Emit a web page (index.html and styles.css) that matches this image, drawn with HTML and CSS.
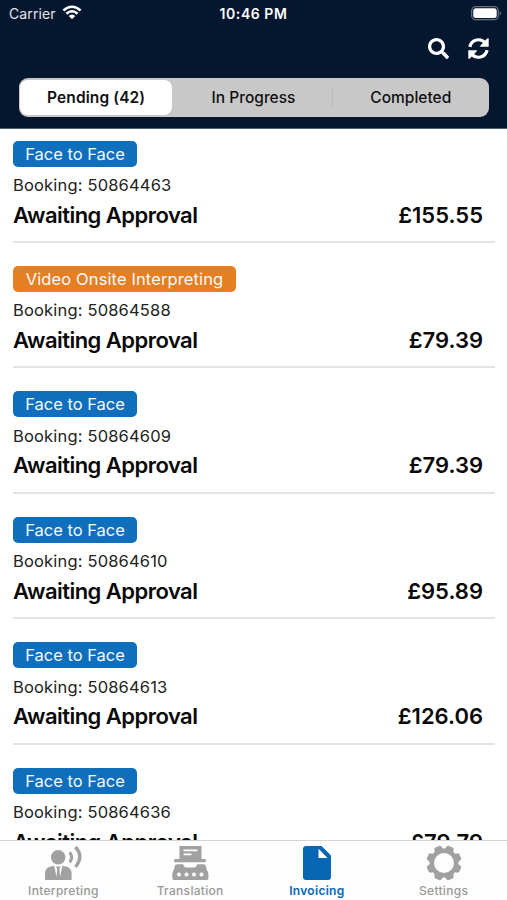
FILE: index.html
```html
<!DOCTYPE html>
<html lang="en">
<head>
<meta charset="utf-8">
<title>Invoicing</title>
<link rel="stylesheet" href="styles.css">
</head>
<body>
<div class="app">
  <header class="header">
    <div class="status">
      <div class="carrier"><span class="carrier-name">Carrier</span>
        <svg class="wifi" width="20" height="15" viewBox="0 0 20 15" fill="none" stroke="#fff" stroke-width="2.500"><path d="M1.400 5.500Q10-2.100 18.600 5.500M4.400 8.800Q10 3.800 15.600 8.800"/><path d="M6.700 11Q10 8 13.300 11L10 14.300Z" fill="#fff" stroke="none"/></svg>
      </div>
      <span class="time">10:46 PM</span>
      <svg class="battery" width="31" height="15" viewBox="0 0 31 15"><rect x=".7" y=".7" width="26.600" height="13" rx="4" fill="none" stroke="#68717f" stroke-width="1.300"/><rect x="2.300" y="2.300" width="23.400" height="9.800" rx="2.500" fill="#fff"/><path d="M28.700 5.200q3 2 0 4.200z" fill="#68717f"/></svg>
    </div>
    <div class="actions">
      <svg width="21" height="21" viewBox="0 0 512 512" fill="#fff"><path d="M505 442.700L405.300 343c-4.500-4.500-10.600-7-17-7H372c27.600-35.300 44-79.700 44-128C416 93.100 322.900 0 208 0S0 93.100 0 208s93.100 208 208 208c48.300 0 92.700-16.400 128-44v16.300c0 6.400 2.500 12.500 7 17l99.700 99.700c9.400 9.400 24.600 9.400 33.900 0l28.300-28.300c9.400-9.400 9.400-24.600.1-34zM208 336c-70.700 0-128-57.200-128-128 0-70.700 57.200-128 128-128 70.700 0 128 57.200 128 128 0 70.700-57.200 128-128 128z"/></svg>
      <svg width="21" height="21" viewBox="0 0 21 21"><g fill="none" stroke="#fff" stroke-width="3.200"><path d="M1.900 8.800A8.800 8.800 0 0 1 17.300 5"/><path d="M19.100 12.200A8.800 8.800 0 0 1 3.700 16"/></g><path d="M20.700 .6V8.800H12.300Q11.800 8.100 12.500 7.400L19.100.6Q20-.1 20.700.6ZM.3 20.400V12.200H8.700Q9.200 12.900 8.500 13.600L1.900 20.400Q1 21.100.3 20.400Z" fill="#fff"/></svg>
    </div>
    <nav class="segments">
      <span class="segment selected">Pending (42)</span>
      <span class="segment divided">In Progress</span>
      <span class="segment">Completed</span>
    </nav>
  </header>
  <main class="list">
    <article class="row"><span class="tag">Face to Face</span><div class="booking">Booking: 50864463</div><div class="summary"><span class="state">Awaiting Approval</span><span class="price">£155.55</span></div></article>
    <article class="row"><span class="tag video">Video Onsite Interpreting</span><div class="booking">Booking: 50864588</div><div class="summary"><span class="state">Awaiting Approval</span><span class="price">£79.39</span></div></article>
    <article class="row"><span class="tag">Face to Face</span><div class="booking">Booking: 50864609</div><div class="summary"><span class="state">Awaiting Approval</span><span class="price">£79.39</span></div></article>
    <article class="row"><span class="tag">Face to Face</span><div class="booking">Booking: 50864610</div><div class="summary"><span class="state">Awaiting Approval</span><span class="price">£95.89</span></div></article>
    <article class="row"><span class="tag">Face to Face</span><div class="booking">Booking: 50864613</div><div class="summary"><span class="state">Awaiting Approval</span><span class="price">£126.06</span></div></article>
    <article class="row"><span class="tag">Face to Face</span><div class="booking">Booking: 50864636</div><div class="summary"><span class="state">Awaiting Approval</span><span class="price">£79.79</span></div></article>
  </main>
  <nav class="tabs">
    <div class="tab">
      <svg width="38" height="36" viewBox="0 0 38 36"><g fill="#a1a1a1"><circle cx="14.200" cy="12.300" r="7.200"/><path d="M1 35v-6.500q0-6 6-7l3.200-.8L12.500 32l.7-8-1.200-2.500h4.600L15.400 24l.7 8 2.300-11.300 3.200.8q6 1 6 7V35z"/></g><g fill="none" stroke="#a1a1a1"><path d="M25.700 7.200q4 5 0 10" stroke-width="3"/><path d="M31.500 2q8.500 9.500 0 20" stroke-width="3.400"/></g></svg>
      <span>Interpreting</span>
    </div>
    <div class="tab">
      <svg width="38" height="36" viewBox="0 0 38 36"><g fill="#a1a1a1"><path d="M8.500 1h22v13h4.200v3.200H3.200V14h5.300z"/><path d="M6 19.300h6.200q1 3.300 3 3.300h8q2 0 3-3.300h6.300q2.200 0 2.500 2.200l.4 2.500 1.800 3.400q.8 6.300-.9 7.600H2.300Q.6 33.300 1.500 27.400L3.100 24l.4-2.500q.3-2.200 2.500-2.200z"/></g><path d="M12.500 5.300h14M12.500 9.300h8" stroke="#fff" stroke-width="1.700"/><g fill="#fff"><circle cx="8" cy="29.500" r="2"/><circle cx="15.500" cy="29.500" r="2"/><circle cx="23" cy="29.500" r="2"/><circle cx="30.500" cy="29.500" r="2"/></g></svg>
      <span>Translation</span>
    </div>
    <div class="tab active">
      <svg width="38" height="36" viewBox="0 0 38 36"><path d="M8 1h15.500L33 10.500V32q0 3-3 3H8q-3 0-3-3V4q0-3 3-3z" fill="#0867b5"/><path d="M20.500 3.700V13h9z" fill="#fff"/></svg>
      <span>Invoicing</span>
    </div>
    <div class="tab">
      <svg width="38" height="36" viewBox="0 0 38 36"><g transform="translate(19 18)"><circle r="12.200" fill="none" stroke="#a1a1a1" stroke-width="4.400"/><g fill="#a1a1a1" transform="rotate(22.500)"><path id="tooth" d="M-5.500-12.300Q-4.200-13.500-3.900-15.700-3.600-17.600-2-17.600H2Q3.600-17.600 3.900-15.700 4.200-13.500 5.500-12.300Z"/><use href="#tooth" transform="rotate(45)"/><use href="#tooth" transform="rotate(90)"/><use href="#tooth" transform="rotate(135)"/><use href="#tooth" transform="rotate(180)"/><use href="#tooth" transform="rotate(225)"/><use href="#tooth" transform="rotate(270)"/><use href="#tooth" transform="rotate(315)"/></g></g></svg>
      <span>Settings</span>
    </div>
  </nav>
</div>
</body>
</html>
```
FILE: styles.css
```css
* { box-sizing: border-box; }
body { margin: 0; background: #fff; font-family: Inter, "Liberation Sans", sans-serif; color: #111; }
svg { display: block; flex: none; }
.app { height: 900px; display: flex; flex-direction: column; overflow: hidden; }
.header { height: 129px; flex: none; background: #04172f; border-bottom: 1px solid #536171; }
.status { height: 28px; display: grid; grid-template-columns: 1fr auto 1fr; align-items: center; padding: 0 6px 1px 9px; color: #fff; }
.carrier { display: flex; align-items: center; gap: 6px; font-size: 14px; color: #e2e6eb; }
.carrier-name { letter-spacing: .1px; }
.wifi { margin-top: -2px; }
.time { font-size: 14px; font-weight: 600; letter-spacing: .55px; margin-right: 3px; }
.battery { justify-self: end; margin-right: -1px; }
.actions { display: flex; justify-content: flex-end; gap: 19px; padding: 10px 18px 0 0; height: 50px; }
.segments { display: grid; grid-template-columns: repeat(3, 1fr); margin: 0 18px 0 19px; height: 39px; border-radius: 9px; background: #c8c8c8; padding: 2px 0 2px 1px; }
.segment { display: flex; align-items: center; justify-content: center; font-size: 15.500px; font-weight: 500; white-space: nowrap; }
.selected { background: #fff; border-radius: 8px; font-weight: 600; margin-right: 4px; letter-spacing: .1px; }
.divided { border-right: 1px solid; border-image: linear-gradient(transparent 22%, #bdbdbd 22%, #bdbdbd 78%, transparent 78%) 1; padding-right: 1px; }
.list { flex: 1; min-height: 0; overflow: hidden; padding: 11.700px 12px 0 13px; }
.row { height: 102.400px; margin-bottom: 23px; border-bottom: 2.500px solid #e4e4e4; }
.tag { display: block; width: 124px; height: 26px; line-height: 26px; border-radius: 5px; background: #106fbd; color: #f4faff; text-align: center; font-size: 16.500px; white-space: nowrap; }
.video { width: 223px; background: #e67e22; letter-spacing: .12px; }
.booking { margin-top: 7.300px; height: 22px; line-height: 22px; font-size: 16.500px; letter-spacing: .17px; color: #222; white-space: nowrap; }
.summary { display: flex; justify-content: space-between; margin-top: 3.700px; padding-right: 12px; height: 30px; line-height: 30px; font-size: 22px; font-weight: 600; color: #090909; white-space: nowrap; }
.state { letter-spacing: -.53px; }
.tabs { flex: none; height: 60px; border-top: 1px solid #d4d4d4; background: #fdfdfd; display: grid; grid-template-columns: repeat(4, 1fr); padding-top: 4px; }
.tab { display: flex; flex-direction: column; align-items: center; color: #999; font-size: 12px; font-weight: 500; line-height: 16px; gap: 2px; letter-spacing: .3px; }
.active { color: #0867b5; font-weight: 600; }
```
